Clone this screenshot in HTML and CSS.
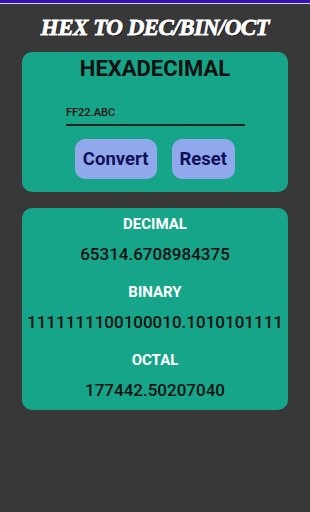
FILE: index.html
```html
<!DOCTYPE html>
<html lang="en">
<head>
    <meta charset="UTF-8">
    <meta name="viewport" content="width=device-width, initial-scale=1.0">
    <title>Hex to Dec/Bin/Oct</title>
    <link rel="stylesheet" href="styles.css">
</head>
<body>
    <div class="topbar"></div>
    <h1 class="title">HEX TO DEC/BIN/OCT</h1>
    <div class="card input-card">
        <h2>HEXADECIMAL</h2>
        <input type="text" id="hexInput" value="FF22.ABC">
        <div class="buttons">
            <button>Convert</button>
            <button>Reset</button>
        </div>
    </div>
    <div class="card results">
        <p class="label">DECIMAL</p>
        <p class="value">65314.6708984375</p>
        <p class="label">BINARY</p>
        <p class="value">1111111100100010.1010101111</p>
        <p class="label">OCTAL</p>
        <p class="value">177442.50207040</p>
    </div>
</body>
</html>
```

FILE: styles.css
```css
body {
    font-family: Roboto, "Liberation Sans", sans-serif;
    background-color: #383838;
    margin: 0;
    height: 512px;
    display: flex;
    flex-direction: column;
    align-items: center;
}
.topbar {
    width: 100%;
    height: 3px;
    background-color: #3b10b4;
    border-bottom: 1px solid #d8d4ee;
}
.title {
    font-family: "Liberation Serif", serif;
    font-style: italic;
    font-weight: bold;
    font-size: 23px;
    color: #fff;
    margin: 12px 0 0;
    height: 24px;
    line-height: 24px;
    letter-spacing: -0.5px;
    -webkit-text-stroke: 0.8px #fff;
    text-shadow: 1px 1px 0 #111;
}
.card {
    background-color: #17a589;
    border-radius: 10px;
    width: 266px;
    box-sizing: border-box;
    text-align: center;
}
.input-card {
    margin-top: 12px;
    height: 140px;
    padding-top: 4px;
}
.input-card h2 {
    margin: 0;
    font-size: 22px;
    line-height: 26px;
    font-weight: bold;
    color: #111;
}
.input-card input {
    display: block;
    width: 179px;
    margin: 24px 0 0 44px;
    padding: 0 0 5px;
    background: none;
    border: none;
    border-bottom: 2px solid #222;
    font-family: Roboto, sans-serif;
    font-size: 11px;
    font-weight: 500;
    color: #111;
    outline: none;
}
.buttons {
    display: flex;
    justify-content: center;
    gap: 15px;
    margin-top: 13px;
}
.buttons button {
    height: 40px;
    padding: 0 8px;
    background-color: #91a9ec;
    color: #121258;
    border: none;
    border-radius: 10px;
    font-family: Roboto, sans-serif;
    font-size: 18.5px;
    font-weight: bold;
}
.results {
    margin-top: 16px;
    height: 202px;
    padding-top: 6px;
}
.results p {
    margin: 0;
}
.label {
    color: #fff;
    font-weight: bold;
    font-size: 15px;
    line-height: 20px;
}
.value {
    color: #111;
    font-weight: 500;
    font-size: 17px;
    line-height: 20px;
    margin: 10px 0 18px !important;
}
```
